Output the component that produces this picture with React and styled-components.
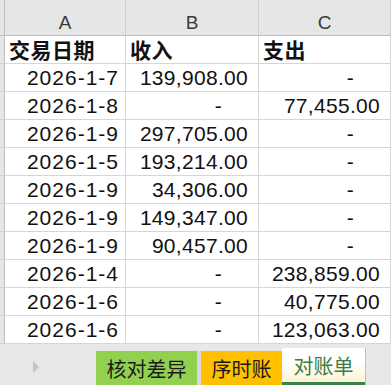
import styled, { createGlobalStyle } from "styled-components";

const GlobalStyle = createGlobalStyle`
  html, body {
    margin: 0;
    padding: 0;
    background: #ffffff;
    overflow: hidden;
  }
  * {
    box-sizing: border-box;
  }
`;

const Page = styled.div`
  width: 391px;
  height: 385px;
  display: flex;
  flex-direction: column;
  font-family: "Liberation Sans", Arial, "Noto Sans CJK SC", sans-serif;
  color: #111;
`;

const Grid = styled.div`
  display: grid;
  grid-template-columns: 5px 121px 133px 132px;
  grid-template-rows: 36px repeat(11, 28px);
`;

const Corner = styled.div`
  background: #e6e6e6;
  border-right: 1px solid #bdbdbd;
  border-bottom: 1px solid #bdbdbd;
`;

const ColHead = styled.div`
  background: #e6e6e6;
  border-right: 1px solid #cfcfcf;
  border-bottom: 1px solid #bdbdbd;
  display: flex;
  align-items: flex-end;
  justify-content: center;
  padding-bottom: 3px;
  font-size: 19px;
  line-height: 19px;
  color: #3a3a3a;
`;

const RowHead = styled.div`
  background: #e6e6e6;
  border-right: 1px solid #bdbdbd;
  border-bottom: 1px solid #cfcfcf;
`;

const Cell = styled.div`
  border-right: 1px solid #d6d6d6;
  border-bottom: 1px solid #d6d6d6;
  display: flex;
  align-items: flex-end;
  justify-content: ${(p) => (p.$left ? "flex-start" : "flex-end")};
  padding: ${(p) => (p.$left ? "0 0 3px 4px" : p.$dash ? "0 36px 3px 0" : "0 10px 3px 0")};
  font-size: 21px;
  line-height: 21px;
  letter-spacing: ${(p) => (p.$left ? "0.5px" : "0.3px")};
  font-weight: ${(p) => (p.$bold ? 700 : 400)};
  font-family: ${(p) =>
    p.$bold ? '"Noto Sans CJK SC", sans-serif' : '"Liberation Sans", Arial, sans-serif'};
  white-space: nowrap;
`;

const DateCell = styled(Cell)`
  padding-right: 6px;
  letter-spacing: 1px;
`;

const TabBar = styled.div`
  flex: 1;
  background: #e8e8e8;
  display: flex;
  align-items: flex-end;
`;

const Arrow = styled.div`
  width: 96px;
  align-self: stretch;
  display: flex;
  align-items: center;
  padding-left: 33px;
  padding-top: 4px;
  &::before {
    content: "";
    border-left: 6px solid #c4c4c4;
    border-top: 6px solid transparent;
    border-bottom: 6px solid transparent;
  }
`;

const Tab = styled.div`
  height: ${(p) => (p.$active ? "37px" : "34px")};
  width: ${(p) => p.$w}px;
  display: flex;
  align-items: center;
  justify-content: center;
  font-family: "Noto Sans CJK SC", sans-serif;
  font-size: 20px;
  color: ${(p) => (p.$active ? "#3d7d3d" : "#1a1a1a")};
  background: ${(p) => p.$bg};
  border-left: ${(p) => (p.$sep ? "4px solid #d9d9d9" : "none")};
  ${(p) =>
    p.$active &&
    `
    border-right: 1px solid #bdbdbd;
    box-shadow: inset 0 -3px 0 #3f7f4a;
    padding-bottom: 2px;
  `}
`;

const rows = [
  ["2026-1-7", "139,908.00", "-"],
  ["2026-1-8", "-", "77,455.00"],
  ["2026-1-9", "297,705.00", "-"],
  ["2026-1-5", "193,214.00", "-"],
  ["2026-1-9", "34,306.00", "-"],
  ["2026-1-9", "149,347.00", "-"],
  ["2026-1-9", "90,457.00", "-"],
  ["2026-1-4", "-", "238,859.00"],
  ["2026-1-6", "-", "40,775.00"],
  ["2026-1-6", "-", "123,063.00"],
];

export default function App() {
  return (
    <Page>
      <GlobalStyle />
      <Grid>
        <Corner />
        <ColHead>A</ColHead>
        <ColHead>B</ColHead>
        <ColHead>C</ColHead>

        <RowHead />
        <Cell $left $bold>交易日期</Cell>
        <Cell $left $bold>收入</Cell>
        <Cell $left $bold>支出</Cell>

        {rows.map((r, i) => [
          <RowHead key={`h${i}`} />,
          <DateCell key={`a${i}`}>{r[0]}</DateCell>,
          <Cell key={`b${i}`} $dash={r[1] === "-"}>{r[1]}</Cell>,
          <Cell key={`c${i}`} $dash={r[2] === "-"}>{r[2]}</Cell>,
        ])}
      </Grid>
      <TabBar>
        <Arrow />
        <Tab $w={101} $bg="#92d050">核对差异</Tab>
        <Tab $w={85} $bg="#ffc000" $sep>序时账</Tab>
        <Tab $w={84} $bg="linear-gradient(#ffffff 35%, #fdf1cf)" $active>对账单</Tab>
      </TabBar>
    </Page>
  );
}
